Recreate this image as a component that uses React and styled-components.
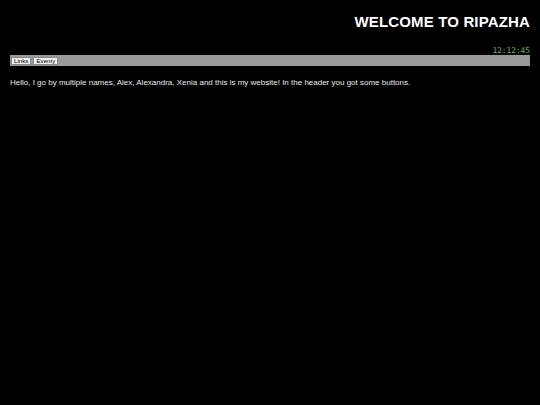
import React, { useState } from 'react';
import styled, { createGlobalStyle } from 'styled-components';

const GlobalStyle = createGlobalStyle`
    html, body {
        margin: 0;
        padding: 0;
        background: #000;
    }
    body {
        font-family: "Comic Sans MS", "Liberation Sans", sans-serif;
        color: #fff;
    }
`

const Page = styled.div`
    padding: 0 10px;
`
const Header = styled.header`
    display: flex;
    flex-direction: column;
    align-items: flex-end;
`
const Title = styled.h1`
    margin: 12px 0 0 0;
    font-size: 15px;
    font-weight: bold;
    line-height: 20px;
    letter-spacing: 0.15px;
    color: #fff;
`
const Clock = styled.div`
    margin-top: 14px;
    font-family: "DejaVu Sans Mono", monospace;
    font-size: 7.8px;
    line-height: 9px;
    color: #5dbb3f;
`
const Nav = styled.nav`
    display: flex;
    gap: 2px;
    align-items: center;
    height: 11px;
    padding: 0 1px;
    background: #999;
`
const NavButton = styled.button`
    height: 8px;
    padding: 0 2px;
    margin: 0;
    border: 1px solid #888;
    border-radius: 0;
    background: #f0f0f0;
    color: #000;
    font-family: "Liberation Sans", sans-serif;
    font-size: 6.2px;
    line-height: 6px;
`
const Text = styled.p`
    margin: 11px 0 0 0;
    font-size: 8px;
    line-height: 11px;
    color: #e8e8e8;
    -webkit-font-smoothing: antialiased;
`

const App = () => {
    const [time] = useState("12:12:45");
    return(
        <Page>
            <GlobalStyle />
            <Header>
                <Title>WELCOME TO RIPAZHA</Title>
                <Clock>{time}</Clock>
            </Header>
            <Nav>
                <NavButton>Links</NavButton>
                <NavButton>Eventy</NavButton>
            </Nav>
            <Text>Hello, I go by multiple names, Alex, Alexandra, Xenia and this is my website! In the header you got some buttons.</Text>
        </Page>
    );
};
export default App;
